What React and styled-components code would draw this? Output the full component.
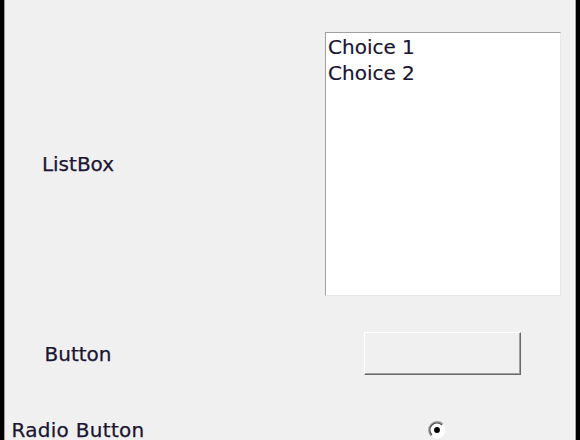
import styled, { createGlobalStyle } from "styled-components";

const GlobalStyle = createGlobalStyle`
    html, body {
        margin: 0;
        padding: 0;
        background: #000;
    }
    body {
        font-family: "DejaVu Sans", Verdana, sans-serif;
    }
`;

const Frame = styled.div`
    box-sizing: border-box;
    width: 580px;
    height: 440px;
    overflow: hidden;
    background-color: #f0f0f0;
    border-left: 4px solid #000;
    border-right: 4px solid #000;
    box-shadow: inset 1px 0 0 #a0a0a0, inset -1px 0 0 #a0a0a0, inset -2px 0 0 #fbfbfb;
    padding: 32px 15px 0 1px;
    display: flex;
    flex-direction: column;
`;

const Row = styled.div`
    display: flex;
    align-items: center;
    flex-shrink: 0;
    margin-top: ${(p) => p.$top || 0}px;
    height: ${(p) => p.$height}px;
`;

const Label = styled.div`
    width: 146px;
    text-align: center;
    font-size: 20px;
    letter-spacing: ${(p) => p.$spacing || 0}px;
    color: #1a1530;
    -webkit-text-stroke: 0.25px #1a1530;
    white-space: nowrap;
`;

const Control = styled.div`
    margin-left: auto;
    width: 236px;
    display: flex;
    justify-content: center;
    align-items: center;
    height: 100%;
`;

const List = styled.div`
    box-sizing: border-box;
    width: 236px;
    height: 100%;
    background: #fff;
    border: 1px solid;
    border-color: #a0a0a0 #e8e8e8 #e8e8e8 #a0a0a0;
    padding: 1px 2px;
`;

const Option = styled.div`
    font-size: 20px;
    line-height: 26px;
    color: #1a1530;
    -webkit-text-stroke: 0.2px #1a1530;
    white-space: nowrap;
`;

const Button = styled.button`
    box-sizing: border-box;
    width: 157px;
    height: 43px;
    background: #f0f0f0;
    border: 1px solid;
    border-color: #ffffff #696969 #696969 #ffffff;
    box-shadow: inset -1px -1px 0 #a0a0a0;
    padding: 0;
    margin-left: -1px;
`;

const Radio = styled.svg`
    display: block;
    margin-left: -12px;
`;

export default function App() {
    return (
        <>
            <GlobalStyle />
            <Frame>
                <Row $height={264}>
                    <Label>ListBox</Label>
                    <Control>
                        <List>
                            <Option>Choice 1</Option>
                            <Option>Choice 2</Option>
                        </List>
                    </Control>
                </Row>
                <Row $top={36} $height={43}>
                    <Label>Button</Label>
                    <Control>
                        <Button />
                    </Control>
                </Row>
                <Row $top={44} $height={22}>
                    <Label $spacing={0.3}>Radio Button</Label>
                    <Control>
                        <Radio width="18" height="18" viewBox="0 0 16 16">
                            <circle cx="8" cy="8" r="7.5" fill="#fff" />
                            <path d="M2.7 13.3 A7.5 7.5 0 0 1 13.3 2.7" fill="none" stroke="#a0a0a0" strokeWidth="1.2" />
                            <path d="M3.5 12.5 A6.3 6.3 0 0 1 12.5 3.5" fill="none" stroke="#555" strokeWidth="1.2" />
                            <circle cx="8" cy="8" r="2.6" fill="#000" />
                        </Radio>
                    </Control>
                </Row>
            </Frame>
        </>
    );
}
